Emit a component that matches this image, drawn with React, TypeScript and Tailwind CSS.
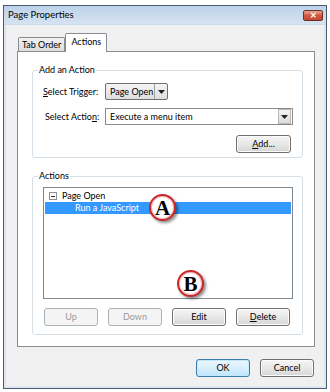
import React from "react";

const F = { fontFamily: 'Lato, "Liberation Sans", sans-serif' };

function Btn({ children, disabled, def, className = "" }: { children: React.ReactNode; disabled?: boolean; def?: boolean; className?: string }) {
  const base = "flex items-center justify-center h-[18px] rounded-[3px] text-[9px] whitespace-nowrap ";
  if (disabled)
    return <div className={base + "border border-[#adb2b5] bg-[#f4f4f4] text-[#9a9a9a] " + className}>{children}</div>;
  if (def)
    return (
      <div className={base + "border border-[#3c7fb1] bg-gradient-to-b from-[#eaf6fd] via-[#d9f0fc] to-[#bee6fd] text-black shadow-[inset_0_0_0_1px_#c3e7fc] " + className}>
        {children}
      </div>
    );
  return (
    <div className={base + "border border-[#707070] bg-gradient-to-b from-[#f6f6f6] via-[#e8e8e8] to-[#d6d6d6] text-black shadow-[inset_0_0_0_1px_#fcfcfc] " + className}>
      {children}
    </div>
  );
}

function Arrow() {
  return (
    <svg width="7" height="4" viewBox="0 0 7 4">
      <path d="M0 0 L7 0 L3.5 4 Z" fill="#222" />
    </svg>
  );
}

function Marker({ letter, className }: { letter: string; className: string }) {
  return (
    <div
      className={
        "absolute w-[27px] h-[27px] rounded-full bg-white border-[2px] border-[#c8282a] shadow-[2px_2px_3px_rgba(0,0,0,0.45),inset_0_0_0_1px_#f3b5b5] flex items-center justify-center " +
        className
      }
    >
      <span className="text-[21px] font-bold leading-none text-black mt-[1px]" style={{ fontFamily: '"Liberation Serif", serif' }}>
        {letter}
      </span>
    </div>
  );
}

export default function App() {
  return (
    <div className="w-[330px] h-[392px] bg-white pt-[5px] pl-[3px] relative overflow-hidden" style={F}>
      <div className="w-[324px] h-[384px] border border-[#4a5a6c] bg-[#f0f0f0] flex flex-col">
        {/* title bar */}
        <div className="h-[19px] flex items-center justify-between pl-[4px] pr-[3px] bg-gradient-to-b from-[#bcd2ea] to-[#d6e3f2] border-b border-[#cfdbe8]">
          <span className="text-[9.5px] text-black whitespace-nowrap">Page Properties</span>
          <div className="w-[20px] h-[11px] rounded-[2px] border border-[#6d2f25] bg-gradient-to-b from-[#e8a493] via-[#d2573f] to-[#c24a30] flex items-center justify-center">
            <span className="text-white text-[8px] font-bold leading-none">✕</span>
          </div>
        </div>
        {/* body */}
        <div className="flex-1 flex flex-col pl-[11px] pr-[8px] border-x-[2px] border-[#dbe6f1] border-b-[2px]">
          {/* tabs */}
          <div className="flex items-end mt-[7px] pl-[1px] h-[19px]">
            <div className="h-[14px] px-[3px] border border-b-0 border-[#898c95] bg-gradient-to-b from-[#f2f2f2] to-[#dcdcdc] text-[9px] flex items-center rounded-t-[2px] whitespace-nowrap">
              Tab Order
            </div>
            <div className="h-[19px] -mb-[1px] px-[5px] border border-b-0 border-[#898c95] bg-white text-[9px] flex items-center pb-[3px] rounded-t-[2px] relative z-10 whitespace-nowrap">
              Actions
            </div>
          </div>
          {/* panel */}
          <div className="w-[298px] h-[296px] border border-[#898c95] bg-white flex flex-col pl-[14px] pr-[11px] text-[9px] whitespace-nowrap">
            {/* group 1 */}
            <div className="mt-[18px] h-[88px] border border-[#d5dfe5] rounded-[3px] relative flex flex-col pl-[10px] pr-[9px]">
              <span className="absolute -top-[8px] left-[5px] bg-white px-[1px] leading-[14px]">Add an Action</span>
              <div className="flex items-center mt-[12px] h-[17px]">
                <span className="w-[62px]">
                  <u>S</u>elect Trigger:
                </span>
                <div className="w-[63px] h-[17px] border border-[#707070] rounded-[2px] bg-gradient-to-b from-[#f4f4f4] to-[#dedede] flex items-center">
                  <span className="flex-1 pl-[4px]">Page Open</span>
                  <div className="w-[13px] h-full border-l border-[#a0a0a0] flex items-center justify-center">
                    <Arrow />
                  </div>
                </div>
              </div>
              <div className="flex items-center mt-[8px] h-[17px]">
                <span className="w-[62px] pl-[2px]">
                  Select Actio<u>n</u>:
                </span>
                <div className="flex-1 h-[17px] border border-[#8a8a8a] bg-white flex items-center">
                  <span className="flex-1 pl-[4px]">Execute a menu item</span>
                  <div className="w-[13px] h-[15px] mr-[1px] border border-[#b8b8b8] bg-gradient-to-b from-[#f4f4f4] to-[#dcdcdc] flex items-center justify-center">
                    <Arrow />
                  </div>
                </div>
              </div>
              <div className="flex justify-end mt-[10px] pr-[2px]">
                <Btn className="w-[55px]">
                  <u>A</u>dd...
                </Btn>
              </div>
            </div>
            {/* group 2 */}
            <div className="mt-[18px] h-[159px] border border-[#d5dfe5] rounded-[3px] relative flex flex-col pl-[10px] pr-[9px]">
              <span className="absolute -top-[8px] left-[5px] bg-white px-[1px] leading-[14px]">Actions</span>
              <div className="mt-[10px] h-[112px] border border-[#828790] bg-white flex flex-col pt-[2px] px-[1px]">
                <div className="flex items-center h-[12px] pl-[4px]">
                  <div className="w-[8px] h-[8px] border border-[#919191] flex items-center justify-center mr-[5px]">
                    <div className="w-[4px] h-[1px] bg-[#333]" />
                  </div>
                  Page Open
                </div>
                <div className="h-[12px] bg-[#3399ff] text-white flex items-center pl-[30px]">Run a JavaScript</div>
              </div>
              <div className="flex gap-[10px] mt-[9px] pl-[1px]">
                <Btn disabled className="w-[54px]">Up</Btn>
                <Btn disabled className="w-[54px]">Down</Btn>
                <Btn className="w-[54px]">Edit</Btn>
                <Btn className="w-[54px]">
                  <u>D</u>elete
                </Btn>
              </div>
            </div>
          </div>
          {/* footer */}
          <div className="flex justify-end gap-[10px] mt-[12px] pr-[2px]">
            <Btn def className="w-[54px]">OK</Btn>
            <Btn className="w-[54px]">Cancel</Btn>
          </div>
        </div>
      </div>
      <Marker letter="A" className="left-[149px] top-[194px]" />
      <Marker letter="B" className="left-[177px] top-[270px]" />
    </div>
  );
}
